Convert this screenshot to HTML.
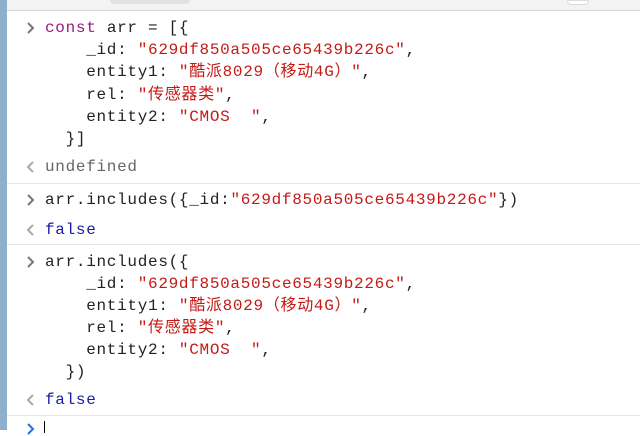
<!DOCTYPE html><html><head><meta charset="utf-8"><style>
body{margin:0;width:640px;height:430px;overflow:hidden;background:#fff;position:relative;font-family:"Liberation Mono","Noto Sans CJK SC",monospace;font-size:16px;letter-spacing:0.7px;color:#222}
.bar{position:absolute;left:0;top:0;width:7px;height:430px;background:#8fb0cc}
.top{position:absolute;left:7px;top:0;right:0;height:10px;background:#f3f3f3;border-bottom:1px solid #d6d6d6}
.tab{position:absolute;top:0;height:4px;background:#e2e2e2;border-radius:0 0 4px 4px}
.l{position:absolute;left:45px;height:22px;line-height:22px;white-space:pre}
.k{color:#a0177f}.s{color:#c41a16}.b{color:#1a1aa6}.u{color:#666}
.ar{position:absolute;left:25px;width:10px;height:14px}
.sep{position:absolute;left:7px;right:0;height:1px;background:#e6e6e6}
</style></head><body>
<div class="bar"></div>
<div class="top"><div class="tab" style="left:103px;width:80px"></div><div class="tab" style="left:560px;width:20px;background:#fff;border:1px solid #ddd;height:3px"></div></div>
<svg class="ar" style="top:21px"><polyline points="3,2 8,7 3,12" fill="none" stroke="#777" stroke-width="2"/></svg>
<div class="l" style="top:17px"><span class="k">const</span> arr = [{</div>
<div class="l" style="top:39px">    _id: <span class="s">"629df850a505ce65439b226c"</span>,</div>
<div class="l" style="top:61px">    entity1: <span class="s">"酷派8029（移动4G）"</span>,</div>
<div class="l" style="top:84px">    rel: <span class="s">"传感器类"</span>,</div>
<div class="l" style="top:106px">    entity2: <span class="s">"CMOS  "</span>,</div>
<div class="l" style="top:128px">  }]</div>
<svg class="ar" style="top:160px"><polyline points="8,2 3,7 8,12" fill="none" stroke="#aaa" stroke-width="2"/></svg>
<div class="l u" style="top:156px">undefined</div>
<div class="sep" style="top:183px"></div>
<svg class="ar" style="top:193px"><polyline points="3,2 8,7 3,12" fill="none" stroke="#777" stroke-width="2"/></svg>
<div class="l" style="top:189px">arr.includes({_id:<span class="s">"629df850a505ce65439b226c"</span>})</div>
<svg class="ar" style="top:223px"><polyline points="8,2 3,7 8,12" fill="none" stroke="#aaa" stroke-width="2"/></svg>
<div class="l b" style="top:219px">false</div>
<div class="sep" style="top:244px"></div>
<svg class="ar" style="top:255px"><polyline points="3,2 8,7 3,12" fill="none" stroke="#777" stroke-width="2"/></svg>
<div class="l" style="top:251px">arr.includes({</div>
<div class="l" style="top:273px">    _id: <span class="s">"629df850a505ce65439b226c"</span>,</div>
<div class="l" style="top:295px">    entity1: <span class="s">"酷派8029（移动4G）"</span>,</div>
<div class="l" style="top:317px">    rel: <span class="s">"传感器类"</span>,</div>
<div class="l" style="top:339px">    entity2: <span class="s">"CMOS  "</span>,</div>
<div class="l" style="top:361px">  })</div>
<svg class="ar" style="top:393px"><polyline points="8,2 3,7 8,12" fill="none" stroke="#aaa" stroke-width="2"/></svg>
<div class="l b" style="top:389px">false</div>
<div class="sep" style="top:415px"></div>
<svg class="ar" style="top:422px"><polyline points="3,2 8,7 3,12" fill="none" stroke="#1a73e8" stroke-width="2"/></svg>
<div style="position:absolute;left:44px;top:421px;width:1px;height:12px;background:#000"></div>
</body></html>
